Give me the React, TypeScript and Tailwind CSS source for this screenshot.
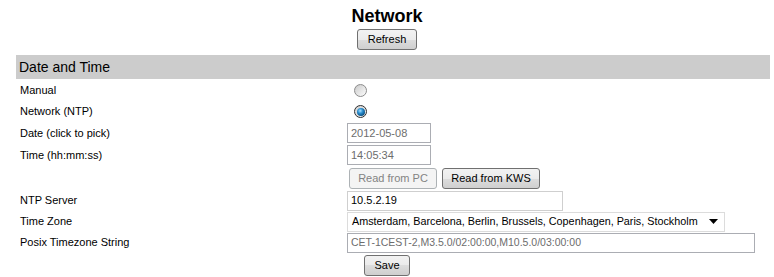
import React from "react";

const btn =
  "h-[21px] rounded-[3px] border border-[#707070] bg-[image:linear-gradient(to_bottom,#f2f2f2_0%,#ebebeb_50%,#dddddd_50%,#cfcfcf_100%)] text-[11px] text-black leading-none";

function Radio({ checked }: { checked?: boolean }) {
  if (checked) {
    return (
      <span className="ml-[7px] flex h-[13px] w-[13px] items-center justify-center rounded-full border border-[#2e2e2e] bg-[image:linear-gradient(to_bottom_right,#cfcfcf,#f6f6f6)]">
        <span className="h-[8px] w-[8px] rounded-full bg-[radial-gradient(circle_at_40%_35%,#a8e0ff_0%,#2b8fd0_35%,#0a4f80_75%,#042c4c_100%)]" />
      </span>
    );
  }
  return (
    <span className="ml-[7px] flex h-[13px] w-[13px] items-center justify-center rounded-full border border-[#8c8c8c] bg-[image:linear-gradient(to_bottom_right,#c8c8c8,#ffffff)]">
      <span className="h-[9px] w-[9px] rounded-full bg-[image:linear-gradient(to_bottom_right,#d0d0d0,#f8f8f8)]" />
    </span>
  );
}

function Row({
  label,
  h,
  children,
}: {
  label?: string;
  h: string;
  children?: React.ReactNode;
}) {
  return (
    <div className={`grid grid-cols-[331px_1fr] items-center ${h}`}>
      <div className="pl-[4px] text-[11px] text-black">{label}</div>
      <div className="flex items-center">{children}</div>
    </div>
  );
}

export default function App() {
  return (
    <div
      className="h-[277px] w-[774px] bg-white"
      style={{ fontFamily: '"Liberation Sans", Arial, sans-serif' }}
    >
      <div className="flex flex-col items-center pt-[6px]">
        <h1 className="text-[18px] font-bold leading-[20px] text-black">Network</h1>
        <button className={`${btn} mt-[3px] h-[20px] w-[60px]`}>Refresh</button>
      </div>
      <div className="ml-[16px] mr-[4px] mt-[5px]">
        <div className="flex h-[24px] items-center bg-[#cccccc] pl-[3px] text-[14px] text-black">
          Date and Time
        </div>
        <Row label="Manual" h="h-[21px] mt-[1px]">
          <Radio />
        </Row>
        <Row label="Network (NTP)" h="h-[21px]">
          <Radio checked />
        </Row>
        <Row label="Date (click to pick)" h="h-[22px]">
          <div className="flex h-[20px] w-[84px] items-center border border-[#abadb3] bg-white pl-[3px] text-[11px] text-[#6d6d6d]">
            2012-05-08
          </div>
        </Row>
        <Row label="Time (hh:mm:ss)" h="h-[22px]">
          <div className="flex h-[20px] w-[84px] items-center border border-[#abadb3] bg-white pl-[3px] text-[11px] text-[#6d6d6d]">
            14:05:34
          </div>
        </Row>
        <Row h="h-[24px]">
          <button className="ml-[2px] h-[21px] w-[88px] rounded-[3px] border border-[#adb2b5] bg-[#f4f4f4] text-[11px] leading-none text-[#838383]">
            Read from PC
          </button>
          <button className={`${btn} ml-[5px] w-[98px]`}>Read from KWS</button>
        </Row>
        <Row label="NTP Server" h="h-[21px]">
          <div className="flex h-[20px] w-[216px] items-center border border-[#cfcfcf] bg-white pl-[3px] text-[11px] text-black">
            10.5.2.19
          </div>
        </Row>
        <Row label="Time Zone" h="h-[21px]">
          <div className="flex h-[20px] w-[378px] items-center justify-between border border-[#dcdcdc] bg-white pl-[4px] pr-[6px] text-[10.8px] text-black">
            <span>Amsterdam, Barcelona, Berlin, Brussels, Copenhagen, Paris, Stockholm</span>
            <svg width="9" height="5" viewBox="0 0 9 5">
              <path d="M0 0 H9 L4.5 5 Z" fill="#000" />
            </svg>
          </div>
        </Row>
        <Row label="Posix Timezone String" h="h-[21px]">
          <div className="flex h-[20px] w-[408px] items-center border border-[#abadb3] bg-white pl-[3px] text-[10.5px] text-[#6d6d6d]">
            CET-1CEST-2,M3.5.0/02:00:00,M10.5.0/03:00:00
          </div>
        </Row>
      </div>
      <div className="mt-[2px] flex justify-center">
        <button className={`${btn} h-[20px] w-[46px]`}>Save</button>
      </div>
    </div>
  );
}
